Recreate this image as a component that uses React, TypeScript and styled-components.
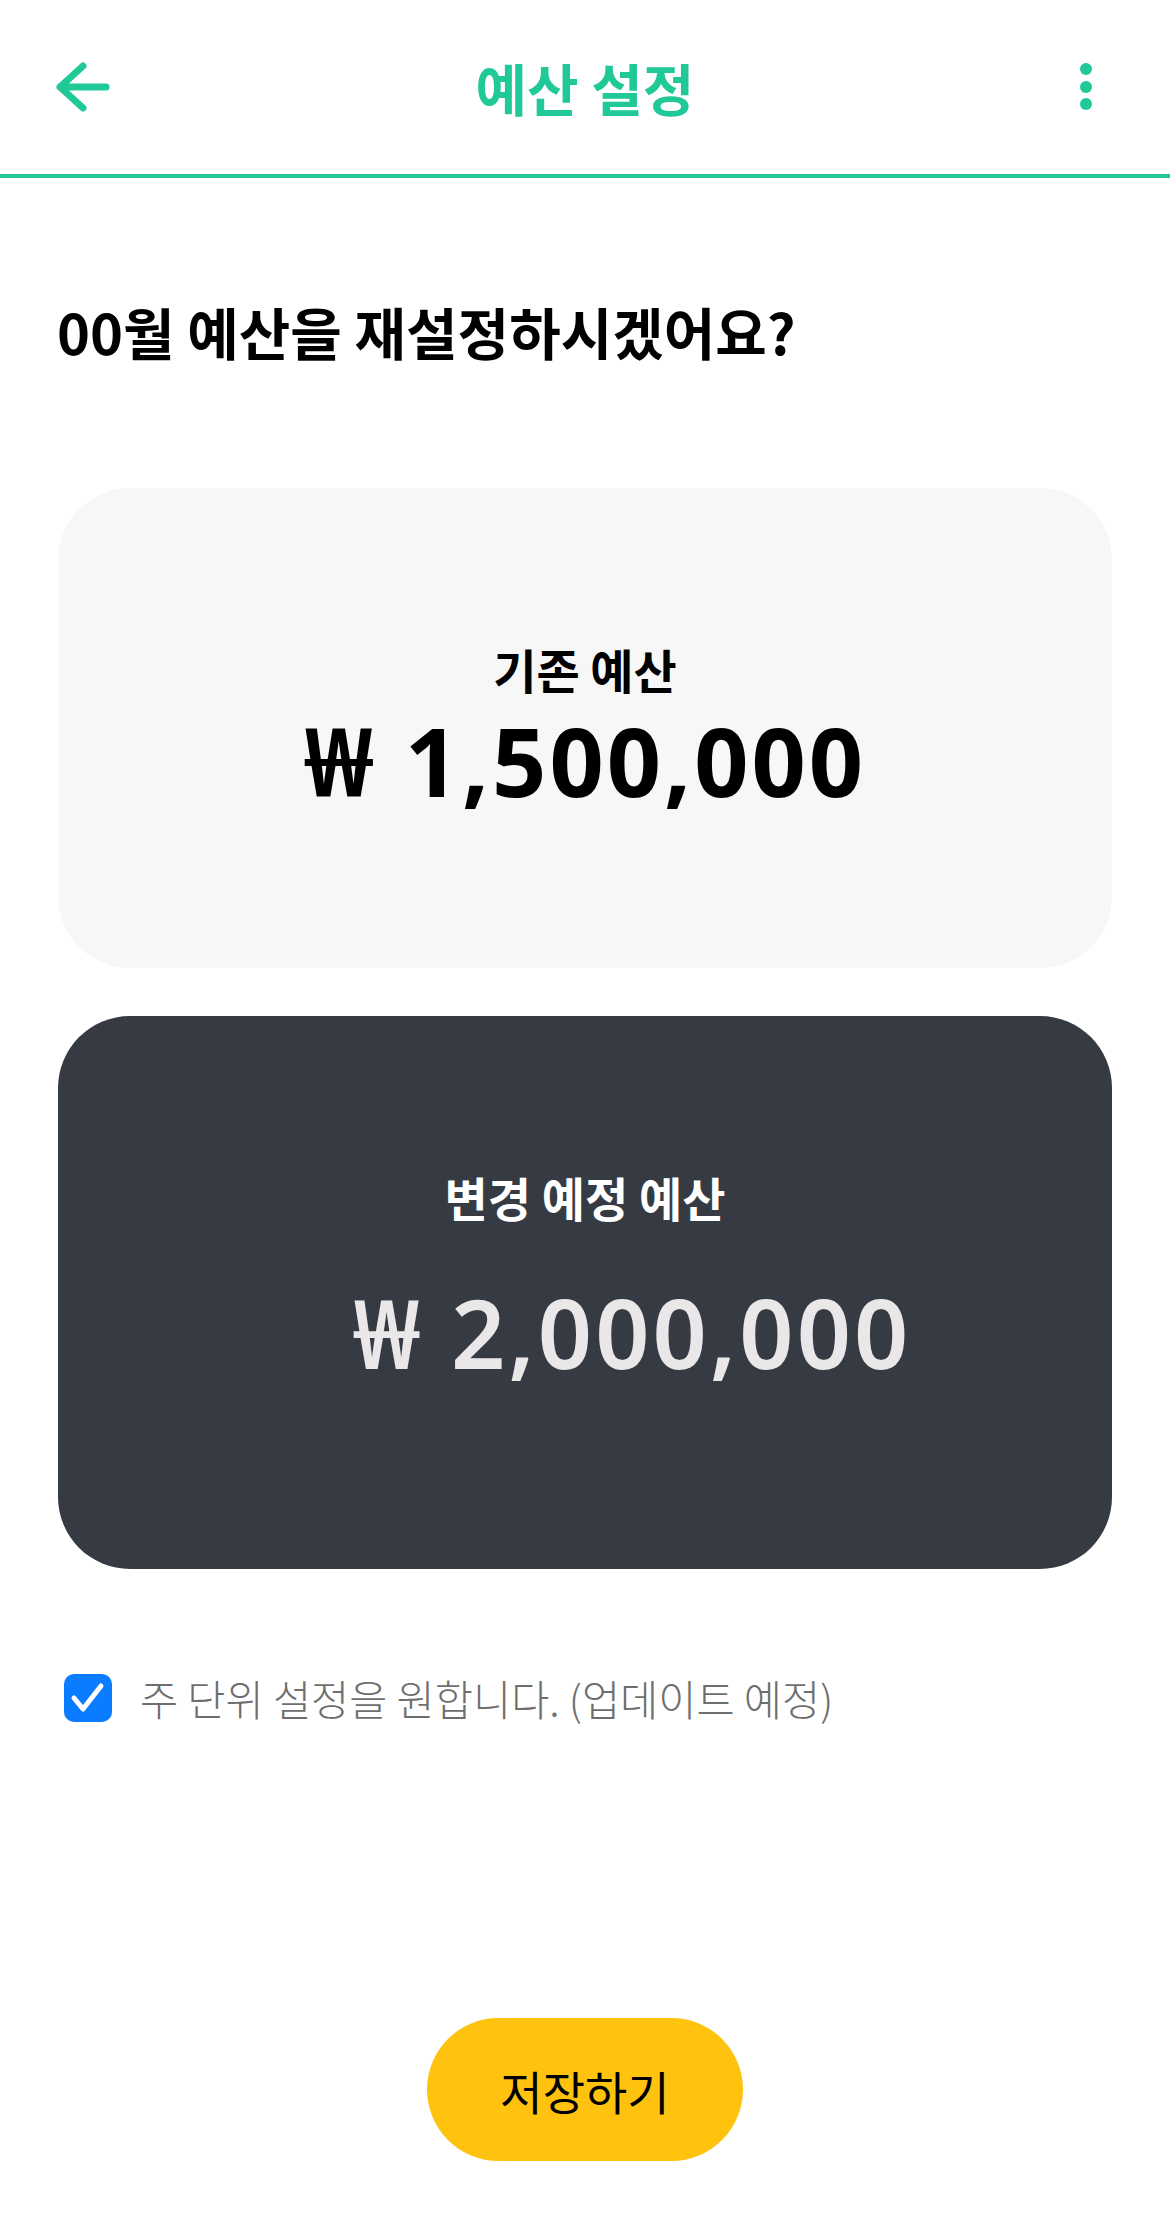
import React, { FC } from 'react'
import styled, { createGlobalStyle } from 'styled-components'

const GREEN = '#20C997'

const GlobalStyle = createGlobalStyle`
  html, body {
    margin: 0;
    padding: 0;
    background: #fff;
  }
  body {
    font-family: 'Noto Sans CJK KR', 'Noto Sans', sans-serif;
  }
  * {
    box-sizing: border-box;
  }
`

const BackIcon: FC = () => (
  <svg width='60' height='60' viewBox='0 0 60 60' fill='none'>
    <path
      d='M8 30 L31 9 M8 30 L31 51 M8 30 H54'
      stroke={GREEN}
      strokeWidth='7'
      strokeLinecap='round'
      strokeLinejoin='round'
    />
  </svg>
)

const MoreIcon: FC = () => (
  <svg width='20' height='60' viewBox='0 0 20 60'>
    <circle cx='10' cy='12' r='6' fill={GREEN} />
    <circle cx='10' cy='30' r='6' fill={GREEN} />
    <circle cx='10' cy='47' r='6' fill={GREEN} />
  </svg>
)

const CheckIcon: FC = () => (
  <svg width='48' height='48' viewBox='0 0 48 48' fill='none'>
    <path
      d='M10 24 L19 35 L37 12'
      stroke='#fff'
      strokeWidth='5'
      strokeLinecap='round'
      strokeLinejoin='round'
    />
  </svg>
)

const App: FC = () => {
  return (
    <Page>
      <GlobalStyle />
      <Header>
        <IconButton side='left' aria-label='back'>
          <BackIcon />
        </IconButton>
        <HeaderTitle>예산 설정</HeaderTitle>
        <IconButton side='right' aria-label='more'>
          <MoreIcon />
        </IconButton>
      </Header>

      <Question>00월 예산을 재설정하시겠어요?</Question>

      <BudgetCard variant='light' cardHeight={480} spacing={16}>
        <CardLabel>기존 예산</CardLabel>
        <Amount weight={700}>₩ 1,500,000</Amount>
      </BudgetCard>

      <BudgetCard variant='dark' cardHeight={553} spacing={60} shift={94}>
        <CardLabel>변경 예정 예산</CardLabel>
        <Amount weight={600}>₩ 2,000,000</Amount>
      </BudgetCard>

      <OptionRow>
        <CheckBox>
          <CheckIcon />
        </CheckBox>
        <OptionText>주 단위 설정을 원합니다. (업데이트 예정)</OptionText>
      </OptionRow>

      <Footer>
        <SaveButton>저장하기</SaveButton>
      </Footer>
    </Page>
  )
}

const Page = styled.div`
  width: 1170px;
  min-height: 2232px;
  display: flex;
  flex-direction: column;
`

const Header = styled.header`
  height: 178px;
  border-bottom: 4px solid ${GREEN};
  display: grid;
  grid-template-columns: 140px 1fr 140px;
  align-items: center;
`

const IconButton = styled.button<{ side: 'left' | 'right' }>`
  border: none;
  background: none;
  padding: 0;
  display: flex;
  justify-self: ${({ side }) => (side === 'left' ? 'start' : 'end')};
  margin-left: ${({ side }) => (side === 'left' ? '52px' : '0')};
  margin-right: ${({ side }) => (side === 'right' ? '74px' : '0')};
  cursor: pointer;
`

const HeaderTitle = styled.h1`
  margin: 0;
  text-align: center;
  font-size: 56px;
  line-height: 1;
  font-weight: 700;
  color: ${GREEN};
`

const Question = styled.h2`
  margin: 121px 0 0;
  padding: 0 57px;
  font-size: 56px;
  line-height: 64px;
  font-weight: 700;
  color: #000;
`

const BudgetCard = styled.section<{
  variant: 'light' | 'dark'
  cardHeight: number
  spacing: number
  shift?: number
}>`
  margin: 0 58px;
  height: ${({ cardHeight }) => cardHeight}px;
  border-radius: 72px;
  padding-top: 153px;
  display: flex;
  flex-direction: column;
  align-items: center;
  background: ${({ variant }) => (variant === 'light' ? '#F7F7F7' : '#363A42')};
  color: ${({ variant }) => (variant === 'light' ? '#000' : '#fff')};

  & + & {
    margin-top: 48px;
  }

  &:first-of-type {
    margin-top: 125px;
  }

  & > p:last-child {
    margin-top: ${({ spacing }) => spacing}px;
    padding-left: ${({ shift }) => shift || 0}px;
    color: ${({ variant }) => (variant === 'light' ? '#000' : '#E9E7E7')};
  }
`

const CardLabel = styled.h3`
  margin: 0;
  font-size: 47px;
  line-height: 56px;
  font-weight: 700;
`

const Amount = styled.p<{ weight: number }>`
  margin: 0;
  font-family: 'Noto Sans', 'Noto Sans CJK KR', sans-serif;
  font-size: 95px;
  line-height: 95px;
  font-weight: ${({ weight }) => weight};
  letter-spacing: 3px;
  white-space: nowrap;
`

const OptionRow = styled.label`
  margin-top: 105px;
  padding-left: 64px;
  display: flex;
  align-items: center;
  gap: 28px;
`

const CheckBox = styled.span`
  width: 48px;
  height: 48px;
  border-radius: 10px;
  background: #0A7CFF;
  display: flex;
  flex-shrink: 0;
`

const OptionText = styled.span`
  font-size: 41.5px;
  line-height: 48px;
  font-weight: 300;
  color: #6E6E6E;
`

const Footer = styled.footer`
  margin-top: auto;
  padding-bottom: 71px;
  display: flex;
  justify-content: center;
`

const SaveButton = styled.button`
  width: 316px;
  height: 143px;
  border: none;
  border-radius: 72px;
  background: #FFC20E;
  color: #000;
  font-family: 'Noto Sans CJK KR', sans-serif;
  font-size: 46px;
  font-weight: 400;
  cursor: pointer;
`

export default App
